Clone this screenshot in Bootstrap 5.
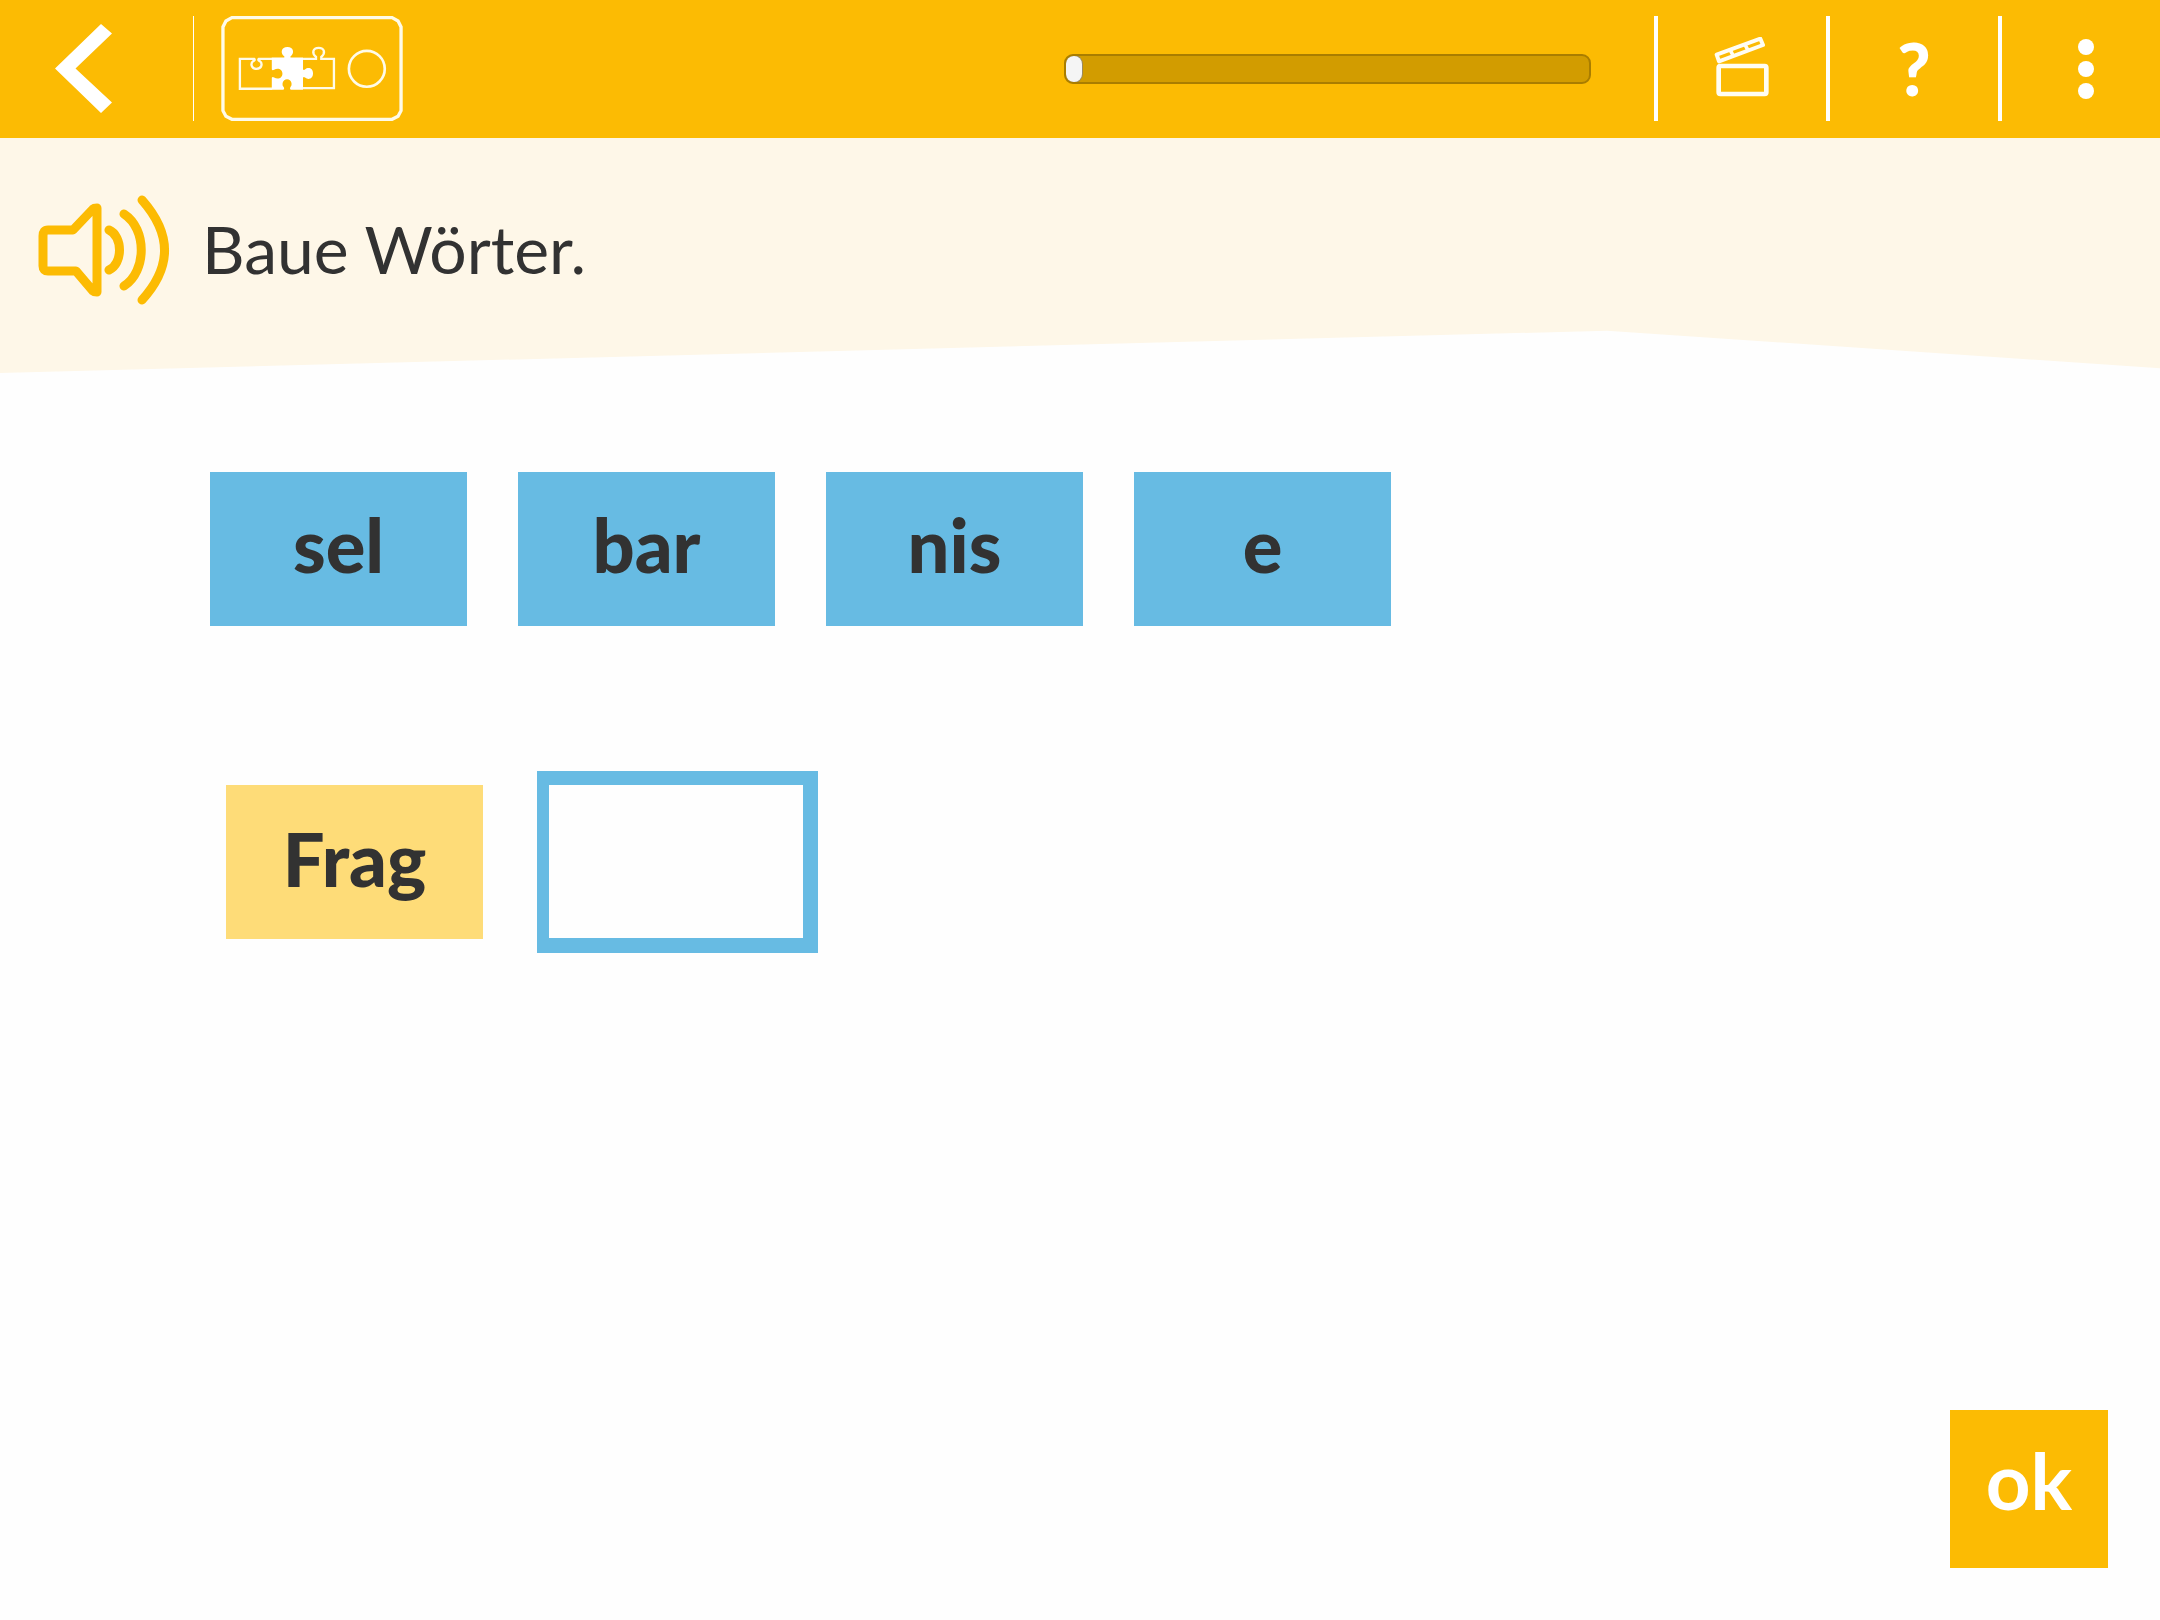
<!DOCTYPE html>
<html lang="de">
<head>
<meta charset="utf-8">
<meta name="viewport" content="width=device-width, initial-scale=1">
<title>Baue Wörter</title>
<link href="https://cdn.jsdelivr.net/npm/bootstrap@5.3.0/dist/css/bootstrap.min.css" rel="stylesheet">
<style>
  :root { --sun: #fcbb03; --sky: #67bbe3; --ink: #323232; }
  body { font-family: Lato, "Open Sans", sans-serif; color: var(--ink); background: #fefefe; }
  .topbar { background: var(--sun); height: 138px; padding-bottom: 1px; }
  .btn { --bs-btn-border-radius: 0; line-height: 1.2; }
  .back-btn { width: 193px; height: 105px; }
  .back-rule { width: 1px; height: 105px; background: #fff; }
  .type-btn { margin-left: 27px; }
  .task-progress { width: 527px; height: 30px; margin-right: 63px; background: #d29c00; border: 2px solid #a97d00; border-radius: 9px; }
  .task-progress .progress-bar { background: #f5f5f5; border-radius: 8px; box-shadow: 0 0 0 1px #9a8a60; }
  .tool-btn { width: 172px; height: 105px; border-left: 4px solid #fff; color: #fff; font-size: 72px; font-weight: 900; }
  .tool-btn.menu-btn { width: 162px; padding-left: 10px; }
  .tool-btn:hover { color: #fff; border-left-color: #fff; }
  .hint { background: #fef7e8; height: 235px; padding: 54px 36px 0; gap: 30px; clip-path: polygon(0 0, 100% 0, 100% 98%, 74.4% 82%, 0 100%); }
  .hint h1 { font-size: 66px; line-height: 78px; padding-top: 18px; }
  .tiles { padding: 99px 52px 0 210px; gap: 51px; }
  .answer { padding: 145px 52px 0 226px; gap: 54px; }
  .tile { width: 257px; height: 154px; padding-bottom: 8px; font-size: 74px; font-weight: 900; color: var(--ink); background: var(--sky); }
  .tile.stem { background: #fedc78; }
  .tile:hover { color: var(--ink); background: var(--sky); }
  .drop-slot { width: 281px; height: 182px; border: solid var(--sky); border-width: 14px 15px 15px 12px; }
  .ok-btn { width: 158px; height: 158px; padding-bottom: 16px; margin: 0 52px 52px; font-size: 78px; font-weight: 700; color: #fff; background: var(--sun); }
  .ok-btn:hover { color: #fff; background: var(--sun); }
</style>
</head>
<body>
<div class="d-flex flex-column min-vh-100">
  <header class="topbar d-flex align-items-center">
    <button class="btn back-btn p-0 border-0" type="button" aria-label="Zurück">
      <svg class="d-block" width="193" height="105" viewBox="0 16 193 105" aria-hidden="true"><path fill="#fff" d="M55 68.5 101 24 112 33.500 75.500 68.500 112 102.500 101 113Z"/></svg>
    </button>
    <div class="back-rule"></div>
    <button class="btn type-btn p-0 border-0" type="button" aria-label="Aufgabentyp">
      <svg class="d-block" width="182" height="105" viewBox="34 47 546 316" fill="none" stroke="#fffbe8" aria-hidden="true">
        <path stroke-width="10" d="M66 52H548L566 62 575 80V332L566 349 548 358H66L48 349 39 332V80L48 62Z"/>
        <path stroke-width="7" d="M187 266H90V176H133Q137 180 130 183C121 190 124 206 140 206C156 206 159 190 150 183Q143 180 147 176H187"/>
        <path stroke-width="7" d="M280 264H373V176H335V170C349 158 344 143 327 143C310 143 305 158 319 170V176H280"/>
        <path fill="#fff" stroke="none" d="M186 172H223Q226 171 223 168C211 158 214 140 233 140C252 140 255 158 243 168Q240 171 243 172H280V207Q281 211 286 208C295 200 310 203 310 220C310 237 295 240 286 232Q281 229 280 233V269H243Q239 267 242 261C249 255 246 237 232 237C218 237 215 255 222 261Q225 267 221 269H186V233Q188 228 193 232C203 239 218 235 218 220C218 206 203 202 193 209Q188 212 186 208Z"/>
        <circle cx="472" cy="206" r="54" stroke-width="8"/>
      </svg>
    </button>
    <div class="progress task-progress ms-auto" role="progressbar" aria-label="Fortschritt" aria-valuenow="3" aria-valuemin="0" aria-valuemax="100">
      <div class="progress-bar" style="width: 3%"></div>
    </div>
    <button class="btn tool-btn p-0 border-top-0 border-bottom-0 border-end-0" type="button" aria-label="Film">
      <svg class="d-block mx-auto" width="56" height="64" viewBox="224 109 168 192" fill="none" stroke="#fffdf3" stroke-linejoin="round" aria-hidden="true">
        <rect x="238" y="196" width="143" height="84" rx="5" stroke-width="14"/>
        <path stroke-width="12" d="M232 162 363 114 371 133 239 182Z"/>
        <path stroke-width="11" d="M272 147 282 166M316 130 326 149"/>
      </svg>
    </button>
    <button class="btn tool-btn p-0 border-top-0 border-bottom-0 border-end-0" type="button" aria-label="Hilfe">?</button>
    <button class="btn tool-btn menu-btn py-0 pe-0 border-top-0 border-bottom-0 border-end-0" type="button" aria-label="Menü">
      <svg class="d-block mx-auto" width="16" height="60" viewBox="0 0 16 60" fill="#fff" aria-hidden="true"><circle cx="8" cy="8" r="8"/><circle cx="8" cy="30" r="8"/><circle cx="8" cy="52" r="8"/></svg>
    </button>
  </header>

  <section class="hint d-flex align-items-start">
    <button class="btn p-0 border-0" type="button" aria-label="Anhören">
      <svg class="d-block" width="136" height="116" viewBox="36 192 136 116" fill="none" stroke="#fcbb03" stroke-width="9" stroke-linecap="round" stroke-linejoin="round" aria-hidden="true">
        <path d="M48 230H73L93 209Q94 208 97 208V292Q94 292 93 291L76 271H48Q43 271 43 266V236Q43 230 48 230Z"/>
        <path d="M109 230C123 236 123 264 109 270M124 214C147 229 147 271 124 286M142 200C172 234 172 267 142 300"/>
      </svg>
    </button>
    <h1 class="fw-normal mb-0">Baue Wörter.</h1>
  </section>

  <main class="flex-grow-1 d-flex flex-column">
    <div class="tiles d-flex flex-wrap">
      <button class="btn tile border-0 px-0 pt-0" type="button">sel</button>
      <button class="btn tile border-0 px-0 pt-0" type="button">bar</button>
      <button class="btn tile border-0 px-0 pt-0" type="button">nis</button>
      <button class="btn tile border-0 px-0 pt-0" type="button">e</button>
    </div>
    <div class="answer d-flex flex-wrap align-items-center">
      <div class="tile stem d-flex align-items-center justify-content-center">Frag</div>
      <div class="drop-slot" role="group" aria-label="Leeres Feld"></div>
    </div>
    <button class="btn ok-btn border-0 px-0 pt-0 mt-auto align-self-end" type="button">ok</button>
  </main>
</div>
<script src="https://cdn.jsdelivr.net/npm/bootstrap@5.3.0/dist/js/bootstrap.bundle.min.js"></script>
</body>
</html>
